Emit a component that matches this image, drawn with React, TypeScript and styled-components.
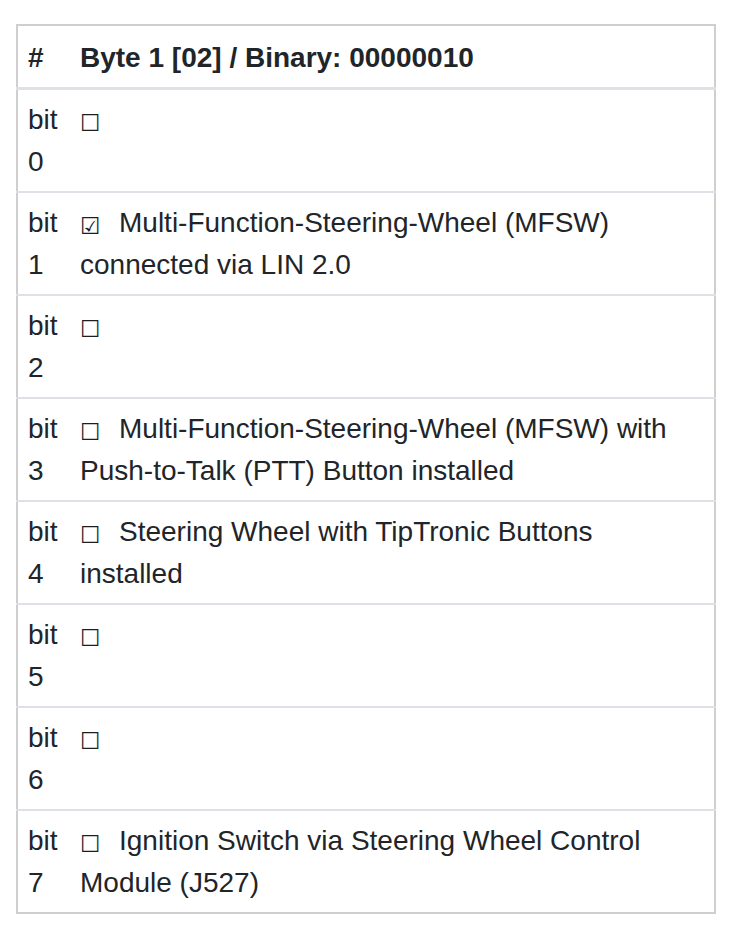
import React from "react";
import styled, { createGlobalStyle } from "styled-components";

type BitRow = {
  bit: number;
  checked: boolean;
  label?: string;
};

const rows: BitRow[] = [
  { bit: 0, checked: false },
  { bit: 1, checked: true, label: "Multi-Function-Steering-Wheel (MFSW) connected via LIN 2.0" },
  { bit: 2, checked: false },
  { bit: 3, checked: false, label: "Multi-Function-Steering-Wheel (MFSW) with Push-to-Talk (PTT) Button installed" },
  { bit: 4, checked: false, label: "Steering Wheel with TipTronic Buttons installed" },
  { bit: 5, checked: false },
  { bit: 6, checked: false },
  { bit: 7, checked: false, label: "Ignition Switch via Steering Wheel Control Module (J527)" },
];

const GlobalStyle = createGlobalStyle`
  html, body {
    margin: 0;
    padding: 0;
    background: #fff;
  }
  body {
    font-family: "Liberation Sans", Arial, Helvetica, sans-serif;
    color: #212529;
  }
`;

const Page = styled.div`
  padding: 24px 16px;
`;

const Table = styled.table`
  width: 700px;
  border-collapse: collapse;
  border: 2px solid #cfcfcf;
  font-size: 28px;
  line-height: 42px;
`;

const HeadCell = styled.th<{ $narrow?: boolean }>`
  text-align: left;
  font-weight: 700;
  vertical-align: top;
  padding: 10.5px 10px 8.5px;
  border-bottom: 3px solid #dee2e6;
  width: ${(p) => (p.$narrow ? "32px" : "auto")};
`;

const Row = styled.tr`
  & + & > td {
    border-top: 2px solid #dee2e6;
  }
`;

const Cell = styled.td`
  vertical-align: top;
  padding: 8.5px 10px;
  &:last-child {
    padding-right: 14px;
  }
`;

const Box = styled.span`
  display: inline-block;
  width: 39px;
  box-sizing: border-box;
  padding-top: 6px;
  font-family: "DejaVu Sans", sans-serif;
  font-size: 23px;
  line-height: 36px;
  vertical-align: top;
  color: #1e1e1e;
`;

export default function App() {
  return (
    <>
      <GlobalStyle />
      <Page>
        <Table>
          <thead>
            <tr>
              <HeadCell $narrow>#</HeadCell>
              <HeadCell>Byte 1 [02] / Binary: 00000010</HeadCell>
            </tr>
          </thead>
          <tbody>
            {rows.map((r) => (
              <Row key={r.bit}>
                <Cell>bit {r.bit}</Cell>
                <Cell>
                  <Box>{r.checked ? "\u2611" : "\u2610"}</Box>
                  {r.label}
                </Cell>
              </Row>
            ))}
          </tbody>
        </Table>
      </Page>
    </>
  );
}
